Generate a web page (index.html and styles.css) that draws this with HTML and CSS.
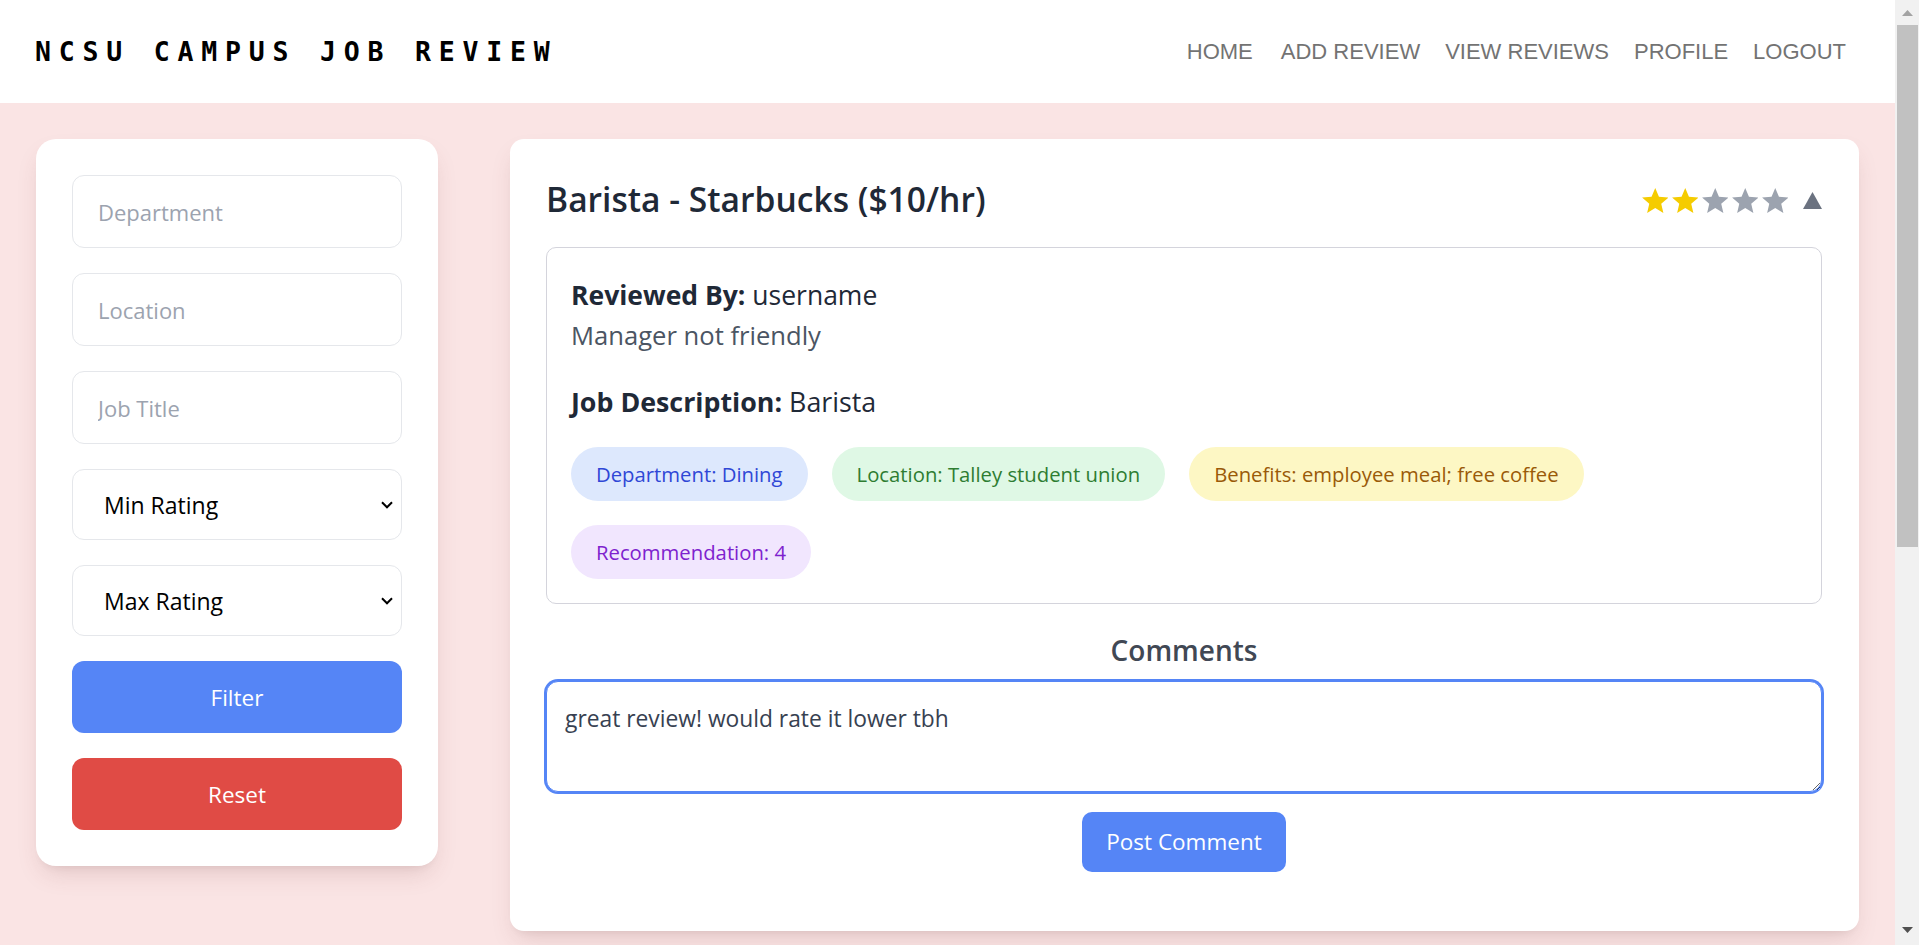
FILE: index.html
```html
<!DOCTYPE html>
<html lang="en">
<head>
<meta charset="utf-8">
<title>NCSU Campus Job Review</title>
<link rel="stylesheet" href="styles.css">
</head>
<body>
<div class="app">
  <header class="topbar">
    <div class="brand">NCSU CAMPUS JOB REVIEW</div>
    <nav class="nav">
      <a href="#" class="nav-first">HOME</a>
      <a href="#">ADD REVIEW</a>
      <a href="#">VIEW REVIEWS</a>
      <a href="#">PROFILE</a>
      <a href="#">LOGOUT</a>
    </nav>
  </header>

  <main class="page">
    <aside class="filters">
      <input class="field" type="text" placeholder="Department">
      <input class="field" type="text" placeholder="Location">
      <input class="field" type="text" placeholder="Job Title">
      <select class="field select"><option>Min Rating</option></select>
      <select class="field select"><option>Max Rating</option></select>
      <button class="btn btn-blue">Filter</button>
      <button class="btn btn-red">Reset</button>
    </aside>

    <section class="reviews">
      <article class="review-card">
        <div class="review-head">
          <h2 class="review-title">Barista - Starbucks ($10/hr)</h2>
          <div class="rating">
            <svg class="star on" viewBox="2 2 20 19"><path d="M12 17.27L18.18 21l-1.64-7.03L22 9.24l-7.19-.61L12 2 9.19 8.63 2 9.24l5.46 4.73L5.82 21z"/></svg>
            <svg class="star on" viewBox="2 2 20 19"><path d="M12 17.27L18.18 21l-1.64-7.03L22 9.24l-7.19-.61L12 2 9.19 8.63 2 9.24l5.46 4.73L5.82 21z"/></svg>
            <svg class="star" viewBox="2 2 20 19"><path d="M12 17.27L18.18 21l-1.64-7.03L22 9.24l-7.19-.61L12 2 9.19 8.63 2 9.24l5.46 4.73L5.82 21z"/></svg>
            <svg class="star" viewBox="2 2 20 19"><path d="M12 17.27L18.18 21l-1.64-7.03L22 9.24l-7.19-.61L12 2 9.19 8.63 2 9.24l5.46 4.73L5.82 21z"/></svg>
            <svg class="star" viewBox="2 2 20 19"><path d="M12 17.27L18.18 21l-1.64-7.03L22 9.24l-7.19-.61L12 2 9.19 8.63 2 9.24l5.46 4.73L5.82 21z"/></svg>
            <svg class="toggle" viewBox="0 0 19 17"><polygon points="9.5,0 19,17 0,17"/></svg>
          </div>
        </div>

        <div class="review-body">
          <p class="line"><strong>Reviewed By:</strong> username</p>
          <p class="summary">Manager not friendly</p>
          <p class="line desc"><strong>Job Description:</strong> Barista</p>
          <div class="tags">
            <span class="tag tag-blue">Department: Dining</span>
            <span class="tag tag-green">Location: Talley student union</span>
            <span class="tag tag-yellow">Benefits: employee meal; free coffee</span>
            <span class="tag tag-purple">Recommendation: 4</span>
          </div>
        </div>

        <div class="comments">
          <h3 class="comments-title">Comments</h3>
          <textarea class="comment-input">great review! would rate it lower tbh</textarea>
          <button class="btn-post">Post Comment</button>
        </div>
      </article>
    </section>
  </main>
</div>

<div class="scrollbar" aria-hidden="true">
  <div class="sb-btn">
    <svg class="sb-arrow" viewBox="0 0 11 6"><polygon points="5.5,0 11,6 0,6" fill="#a3a3a3"/></svg>
  </div>
  <div class="sb-thumb"></div>
  <div class="sb-space"></div>
  <div class="sb-btn sb-btn-bottom">
    <svg class="sb-arrow" viewBox="0 0 11 6"><polygon points="0,0 11,0 5.5,6" fill="#505050"/></svg>
  </div>
</div>
</body>
</html>
```

FILE: styles.css
```css
* {
  box-sizing: border-box;
}

body {
  margin: 0;
  display: flex;
  align-items: flex-start;
  font-family: "Open Sans", "Noto Sans", sans-serif;
  background: #fae4e4;
  color: #1f2937;
}

.app {
  flex: 1;
  min-width: 0;
}

/* ---------- window scrollbar (part of the captured frame) ---------- */
.scrollbar {
  flex: none;
  width: 24px;
  height: 100vh;
  background: #f1f1f1;
  display: flex;
  flex-direction: column;
}

.sb-btn {
  height: 25px;
  display: flex;
  align-items: center;
  justify-content: center;
  padding-left: 1px;
}

.sb-btn-bottom {
  height: 23px;
  align-items: flex-start;
  padding-top: 5px;
}

.sb-arrow {
  width: 11px;
  height: 6px;
}

.sb-thumb {
  height: 522px;
  margin: 0 1px 0 2px;
  background: #c1c1c1;
}

.sb-space {
  flex: 1;
}

/* ---------- header ---------- */
.topbar {
  height: 103px;
  background: #ffffff;
  display: flex;
  align-items: center;
  justify-content: space-between;
  padding: 0 49px 0 35px;
}

.brand {
  font-family: "DejaVu Sans Mono", monospace;
  font-weight: 700;
  font-size: 26.5px;
  letter-spacing: 7.8px;
  color: #000000;
}

.nav {
  display: flex;
  gap: 25px;
}

.nav a {
  font-family: "Liberation Sans", Arial, sans-serif;
  font-size: 22px;
  color: #737373;
  text-decoration: none;
}

.nav .nav-first {
  margin-right: 3px;
}

/* ---------- layout ---------- */
.page {
  display: grid;
  grid-template-columns: 402px 1fr;
  column-gap: 72px;
  align-items: start;
  padding: 36px;
}

/* ---------- filters ---------- */
.filters {
  background: #ffffff;
  border-radius: 20px;
  padding: 36px;
  display: flex;
  flex-direction: column;
  gap: 25px;
  box-shadow: 0 12px 24px -6px rgba(120, 60, 60, 0.18), 0 6px 10px -6px rgba(0, 0, 0, 0.08);
}

.field {
  height: 73px;
  width: 100%;
  border: 1px solid #e5e7eb;
  border-radius: 12px;
  padding: 0 25px;
  font: inherit;
  font-size: 22px;
  color: #111111;
  background: #ffffff;
  outline: none;
}

.field::placeholder {
  color: #9ca3af;
}

.select {
  height: 71px;
  appearance: none;
  -webkit-appearance: none;
  padding-left: 31px;
  font-size: 23px;
  color: #000000;
  background: #ffffff url("data:image/svg+xml,%3Csvg xmlns='http://www.w3.org/2000/svg' viewBox='0 0 12 8'%3E%3Cpath d='M1 1.3l5 5 5-5' fill='none' stroke='%23000' stroke-width='2'/%3E%3C/svg%3E") no-repeat right 8px center / 12px 8px;
}

.btn {
  height: 72px;
  width: 100%;
  border: 0;
  border-radius: 12px;
  color: #ffffff;
  font: inherit;
  font-size: 22.5px;
}

.btn-blue {
  background: #5585f6;
}

.btn-red {
  background: #e04b45;
}

/* ---------- review card ---------- */
.review-card {
  background: #ffffff;
  border-radius: 14px;
  padding: 36px 37px 36px 36px;
  box-shadow: 0 12px 24px -6px rgba(120, 60, 60, 0.18), 0 6px 10px -6px rgba(0, 0, 0, 0.08);
}

.review-head {
  display: flex;
  align-items: center;
  justify-content: space-between;
  height: 48px;
  margin-bottom: 24px;
}

.review-title {
  margin: 0;
  font-size: 33.6px;
  font-weight: 600;
  line-height: 48px;
  color: #1f2937;
}

.rating {
  display: flex;
  align-items: center;
  gap: 3.5px;
  padding-top: 3px;
}

.star {
  width: 26.5px;
  height: 25px;
  fill: #9ca3af;
}

.star.on {
  fill: #f5cc00;
}

.toggle {
  width: 19px;
  height: 17px;
  margin-left: 11.5px;
  fill: #6b7280;
}

.review-body {
  border: 1px solid #d4d4dc;
  border-radius: 10px;
  padding: 29px 24px 24px;
}

.review-body p {
  margin: 0;
}

.line {
  font-size: 26.5px;
  line-height: 36px;
  color: #1f2937;
}

.line strong {
  font-weight: 700;
}

.summary {
  margin-top: 5px !important;
  font-size: 25.6px;
  line-height: 36px;
  color: #4b5563;
}

.desc {
  margin-top: 30px !important;
  font-size: 26.8px;
}

.tags {
  display: flex;
  flex-wrap: wrap;
  gap: 24px;
  margin-top: 26.5px;
}

.tag {
  height: 54px;
  line-height: 54px;
  padding: 0 25px;
  border-radius: 27px;
  font-size: 20.3px;
  font-weight: 500;
}

.tag-blue {
  background: #dde8fd;
  color: #2f47d6;
}

.tag-green {
  background: #dff8e5;
  color: #2e7d32;
}

.tag-yellow {
  background: #fdf7c4;
  color: #9a5a08;
}

.tag-purple {
  background: #f1e6fe;
  color: #7e22ce;
}

/* ---------- comments ---------- */
.comments {
  display: flex;
  flex-direction: column;
  align-items: center;
  margin-bottom: 23px;
}

.comments-title {
  margin: 26px 0 11px;
  font-size: 28px;
  line-height: 40px;
  font-weight: 600;
  color: #414854;
}

.comment-input {
  display: block;
  width: 100%;
  height: 111px;
  border: 1px solid #5585f6;
  box-shadow: 0 0 0 2px #5585f6;
  border-radius: 12px;
  padding: 21px 18px 17px;
  font: inherit;
  font-size: 22.8px;
  line-height: 32px;
  color: #374151;
  outline: none;
}

.btn-post {
  margin-top: 20px;
  height: 60px;
  padding: 0 24px;
  border: 0;
  border-radius: 10px;
  background: #5585f6;
  color: #ffffff;
  font: inherit;
  font-size: 22.5px;
}
```
